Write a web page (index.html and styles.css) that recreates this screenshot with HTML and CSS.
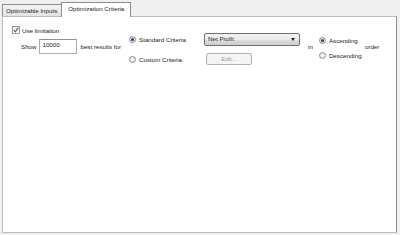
FILE: index.html
```html
<!DOCTYPE html>
<html lang="en">
<head>
  <meta charset="UTF-8">
  <title>Optimization Criteria</title>
  <link rel="stylesheet" href="styles.css">
</head>
<body>
  <div class="tabctl">
    <div class="tabs">
      <div class="tab">Optimizable Inputs</div>
      <div class="tab active">Optimization Criteria</div>
    </div>

    <div class="page">
      <!-- limit -->
      <label class="check">
        <span class="box">
          <svg width="6" height="6" viewBox="0 0 6 6"><path d="M0.7 3 L2.3 4.8 L5.3 0.9" fill="none" stroke="#4a5f8c" stroke-width="1.1"/></svg>
        </span>
        Use limitation
      </label>

      <div class="row">
        <div class="show">
          <span>Show</span>
          <span class="input">10000</span>
          <span>best results for</span>
        </div>

        <div class="criteria">
          <div class="crit-row">
            <span class="opt"><span class="radio on"></span>Standard Criteria</span>
            <span class="select">Net Profit<span class="arrow"></span></span>
          </div>
          <div class="crit-row">
            <span class="opt"><span class="radio"></span>Custom Criteria</span>
            <span class="btn">Edit...</span>
          </div>
        </div>

        <span class="word in">in</span>

        <div class="order">
          <span class="opt"><span class="radio on"></span>Ascending</span>
          <span class="opt"><span class="radio"></span>Descending</span>
        </div>

        <span class="word">order</span>
      </div>
    </div>
  </div>
</body>
</html>
```

FILE: styles.css
```css
body {
  margin: 0;
  width: 400px;
  height: 235px;
  background: #f0f0f0;
  font-family: "Liberation Sans", Arial, sans-serif;
  font-size: 6.2px;
  color: #222;
  overflow: hidden;
}

.tabctl {
  padding: 2px 0 0 2px;
}

.tabs {
  display: flex;
  align-items: flex-end;
  height: 14px;
}

.tab {
  position: relative;
  height: 12px;
  box-sizing: border-box;
  padding: 0 4px 0 3px;
  line-height: 11px;
  border: 1px solid #8a8d96;
  border-bottom: none;
  background: linear-gradient(#f4f4f4, #e3e3e3);
}

.tab.active {
  height: 15px;
  margin-left: -1px;
  margin-bottom: -1px;
  padding: 0 6px;
  line-height: 12px;
  background: #fff;
  z-index: 1;
}

.page {
  width: 395px;
  height: 217px;
  box-sizing: border-box;
  background: #fff;
  border: 1px solid #bcbcbc;
  border-right-color: #8c8c8c;
  padding: 9px 0 0 0;
}

.check {
  display: flex;
  align-items: center;
  margin-left: 9px;
  height: 8px;
  gap: 2px;
}

.box {
  width: 8px;
  height: 8px;
  box-sizing: border-box;
  border: 1px solid #9a9b9b;
  background: linear-gradient(#ececec, #fdfdfd);
  display: flex;
  align-items: center;
  justify-content: center;
}

.row {
  display: flex;
  align-items: center;
  margin-top: -1px;
  padding-left: 18px;
}

.show {
  display: flex;
  align-items: center;
  gap: 3px;
  margin-bottom: 5px;
}

.input {
  width: 38px;
  height: 15px;
  box-sizing: border-box;
  border: 1px solid #abadb3;
  border-top-color: #8e9196;
  padding: 1px 0 0 2px;
  line-height: 7px;
  background: #fff;
}

.criteria {
  display: flex;
  flex-direction: column;
  gap: 7px;
  margin-left: 8px;
}

.crit-row {
  display: flex;
  align-items: center;
}

.opt {
  display: flex;
  align-items: center;
  gap: 3px;
}

.criteria .opt {
  width: 75px;
}

.radio {
  width: 7px;
  height: 7px;
  box-sizing: border-box;
  border-radius: 50%;
  border: 1px solid #8f8f8f;
  background: radial-gradient(circle, #f4f4f4 30%, #d4d4d4 100%);
  position: relative;
}

.radio.on::after {
  content: "";
  position: absolute;
  left: 1px;
  top: 1px;
  width: 3px;
  height: 3px;
  border-radius: 50%;
  background: #1f3b6b;
}

.select {
  position: relative;
  width: 96px;
  height: 13px;
  box-sizing: border-box;
  border: 1px solid #707070;
  border-radius: 2px;
  padding: 1px 0 0 3px;
  line-height: 8px;
  background: linear-gradient(#f2f2f2 0%, #ebebeb 50%, #dddddd 51%, #cfcfcf 100%);
}

.arrow {
  position: absolute;
  right: 4px;
  top: 4px;
  border-left: 2.5px solid transparent;
  border-right: 2.5px solid transparent;
  border-top: 3px solid #222;
}

.btn {
  width: 46px;
  height: 12px;
  box-sizing: border-box;
  margin-left: 2px;
  border: 1px solid #adb2b5;
  border-radius: 2px;
  background: #f4f4f4;
  color: #a3a3a3;
  text-align: center;
  line-height: 10px;
}

.word {
  margin-bottom: 5px;
  color: #222;
}

.in {
  margin-left: 8px;
}

.order {
  display: flex;
  flex-direction: column;
  gap: 7px;
  width: 46px;
  margin-left: 6px;
  margin-bottom: 2px;
}

.order .opt {
  height: 8px;
}
```
